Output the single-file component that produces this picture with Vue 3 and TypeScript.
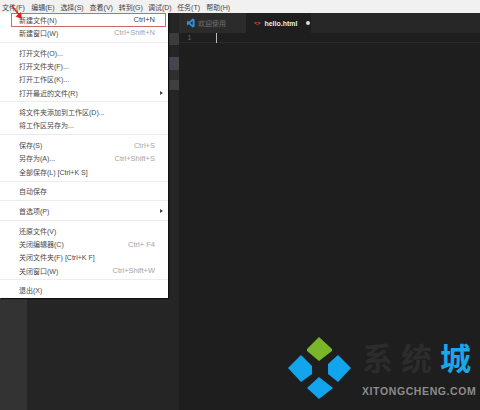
<script setup lang="ts">
interface MenuItem {
  label: string
  key?: string
  arrow?: boolean
}

const menus = ['文件(F)', '编辑(E)', '选择(S)', '查看(V)', '转到(G)', '调试(D)', '任务(T)', '帮助(H)']

const groups: MenuItem[][] = [
  [{ label: '新建文件(N)', key: 'Ctrl+N' }, { label: '新建窗口(W)', key: 'Ctrl+Shift+N' }],
  [
    { label: '打开文件(O)...' },
    { label: '打开文件夹(F)...' },
    { label: '打开工作区(K)...' },
    { label: '打开最近的文件(R)', arrow: true },
  ],
  [{ label: '将文件夹添加到工作区(D)...' }, { label: '将工作区另存为...' }],
  [
    { label: '保存(S)', key: 'Ctrl+S' },
    { label: '另存为(A)...', key: 'Ctrl+Shift+S' },
    { label: '全部保存(L) [Ctrl+K S]' },
  ],
  [{ label: '自动保存' }],
  [{ label: '首选项(P)', arrow: true }],
  [
    { label: '还原文件(V)' },
    { label: '关闭编辑器(C)', key: 'Ctrl+ F4' },
    { label: '关闭文件夹(F) [Ctrl+K F]' },
    { label: '关闭窗口(W)', key: 'Ctrl+Shift+W' },
  ],
  [{ label: '退出(X)' }],
]
</script>

<template>
  <div class="window">
    <div class="menubar">
      <span v-for="m in menus" :key="m" class="menubar-item">{{ m }}</span>
    </div>
    <div class="main">
      <div class="activity" />
      <div class="sidebar">
        <div class="file file-a" />
        <div class="file file-b" />
        <div class="file file-c" />
        <div class="file file-d" />
      </div>
      <div class="editor">
        <div class="tabs">
          <div class="tab welcome">
            <svg class="vs-icon" viewBox="0 0 10 12" width="8" height="10">
              <path d="M7 0.5 L9.5 1.5 V10.5 L7 11.5 L2.5 7.5 L0.8 8.8 L0 8.2 V3.8 L0.8 3.2 L2.5 4.5 Z M7 3.5 L4 6 L7 8.5 Z" fill="#2f8fd8" fill-rule="evenodd" />
            </svg>
            <span>欢迎使用</span>
          </div>
          <div class="tab active">
            <span class="code-icon">&lt;&gt;</span>
            <span>hello.html</span>
            <span class="dot" />
          </div>
        </div>
        <div class="code">
          <span class="line-no">1</span>
          <span class="cursor" />
        </div>
      </div>
    </div>

    <div class="menu">
      <div v-for="(group, i) in groups" :key="i" class="group">
        <div v-for="item in group" :key="item.label" class="row">
          <span>{{ item.label }}</span>
          <span v-if="item.key" class="shortcut">{{ item.key }}</span>
          <span v-if="item.arrow" class="arrow" />
        </div>
      </div>
    </div>
    <div class="highlight" />
    <svg class="pointer" viewBox="0 0 14 16" width="14" height="16">
      <path d="M2 1 L10 11" stroke="#e02020" stroke-width="1.3" fill="none" />
      <path d="M12 14 L5.5 11.5 L11 7 Z" fill="#e02020" />
    </svg>

    <div class="watermark">
      <svg class="logo" viewBox="0 0 64 64" width="64" height="64">
        <path d="M31 0 L44 12 L44 14 L31 24 L19 14 L19 12 Z" fill="#7ab62a" />
        <path d="M13 18 L24 29 L24 37 L13 45 L0 31 Z" fill="#12a5ec" />
        <path d="M50 18 L63 31 L50 45 L40 37 L40 27 Z" fill="#12a5ec" />
        <path d="M31 40 L45 51 L31 62 L19 51 Z" fill="#12a5ec" />
      </svg>
      <div class="brand">
        <div class="brand-cn">
          <span>系</span>
          <span>统</span>
          <span class="blue">城</span>
        </div>
        <div class="brand-en">XITONGCHENG.COM</div>
      </div>
    </div>
  </div>
</template>

<style scoped>
.window {
  position: relative;
  width: 480px;
  height: 410px;
  display: flex;
  flex-direction: column;
  overflow: hidden;
  background: #1e1e1e;
  font-family: "Liberation Sans", "Noto Sans CJK SC", sans-serif;
}

.menubar {
  height: 13px;
  flex: none;
  display: flex;
  align-items: center;
  padding-left: 2px;
  background: #f1f1f1;
  font-size: 7px;
  color: #444;
}

.menubar-item {
  width: 29.2px;
  white-space: nowrap;
}

.main {
  flex: 1;
  display: flex;
}

.activity {
  width: 27px;
  background: #333333;
}

.sidebar {
  width: 152px;
  background: #252526;
  position: relative;
}

.file {
  position: absolute;
  left: 141px;
  width: 11px;
}

.file-a {
  top: 20px;
  height: 12px;
  background: #3c3c3c;
}

.file-b {
  top: 44px;
  height: 13px;
  background: #45454e;
}

.file-c {
  top: 57px;
  height: 10px;
  background: #2f2f2f;
}

.file-d {
  top: 67px;
  height: 10px;
  background: #3f3f3f;
}

.editor {
  flex: 1;
  display: flex;
  flex-direction: column;
}

.tabs {
  height: 20px;
  flex: none;
  display: flex;
  background: #272727;
  font-size: 7px;
}

.tab {
  display: flex;
  align-items: center;
  white-space: nowrap;
  box-sizing: border-box;
  color: #707070;
}

.welcome {
  width: 67px;
  gap: 3px;
  background: #2b2b2b;
  padding-left: 8px;
}

.active {
  width: 65px;
  gap: 4px;
  background: #1e1e1e;
  color: #e8e8e8;
  padding-left: 8px;
  font-weight: bold;
}

.code-icon {
  color: #e2572e;
  font-size: 5.5px;
}

.dot {
  width: 4px;
  height: 4px;
  border-radius: 50%;
  background: #ddd;
  margin-left: 4px;
}

.code {
  display: flex;
  align-items: flex-start;
  height: 9px;
  border-bottom: 1px solid #2a2a2a;
}

.line-no {
  width: 21px;
  text-align: center;
  font-size: 7px;
  color: #666;
  line-height: 10px;
}

.cursor {
  width: 1px;
  height: 10px;
  margin-left: 16px;
  background: #bbb;
}

.menu {
  position: absolute;
  left: 0;
  top: 13px;
  width: 168px;
  height: 285px;
  background: #fff;
  box-shadow: 1px 1px 1px #111;
  font-size: 7px;
  color: #4a4a4a;
}

.group {
  padding: 3.2px 0 2.2px;
  border-bottom: 1px solid #ececec;
}

.group:first-child {
  padding-top: 0;
}

.group:last-child {
  border-bottom: none;
}

.row {
  height: 13.3px;
  display: flex;
  align-items: center;
  justify-content: space-between;
  padding: 0 13px 0 19px;
  white-space: nowrap;
}

.shortcut {
  color: #a5a5a5;
  font-size: 7.5px;
}

.group:first-child .row:first-child .shortcut {
  color: #444;
}

.arrow {
  margin-right: -8px;
  border-left: 3px solid #444;
  border-top: 2px solid transparent;
  border-bottom: 2px solid transparent;
}

.highlight {
  position: absolute;
  left: 11px;
  top: 13px;
  width: 155px;
  height: 14px;
  box-sizing: border-box;
  border: 1px solid #c96a6a;
}

.pointer {
  position: absolute;
  left: 10px;
  top: 5px;
}

.watermark {
  position: absolute;
  left: 288px;
  top: 337px;
  display: flex;
  gap: 10px;
}

.logo {
  flex: none;
}

.brand-cn {
  display: flex;
  gap: 8px;
  font-size: 31px;
  line-height: 38px;
  font-weight: bold;
  color: #2c2c2c;
  white-space: nowrap;
  margin-top: 4px;
}

.blue {
  color: #1aa7e8;
}

.brand-en {
  font-size: 10.5px;
  line-height: 12px;
  letter-spacing: 0.6px;
  color: #8c8c8c;
  font-weight: bold;
  white-space: nowrap;
  margin-top: 6px;
}
</style>

<style>
html,
body {
  margin: 0;
  background: #1e1e1e;
}
</style>
